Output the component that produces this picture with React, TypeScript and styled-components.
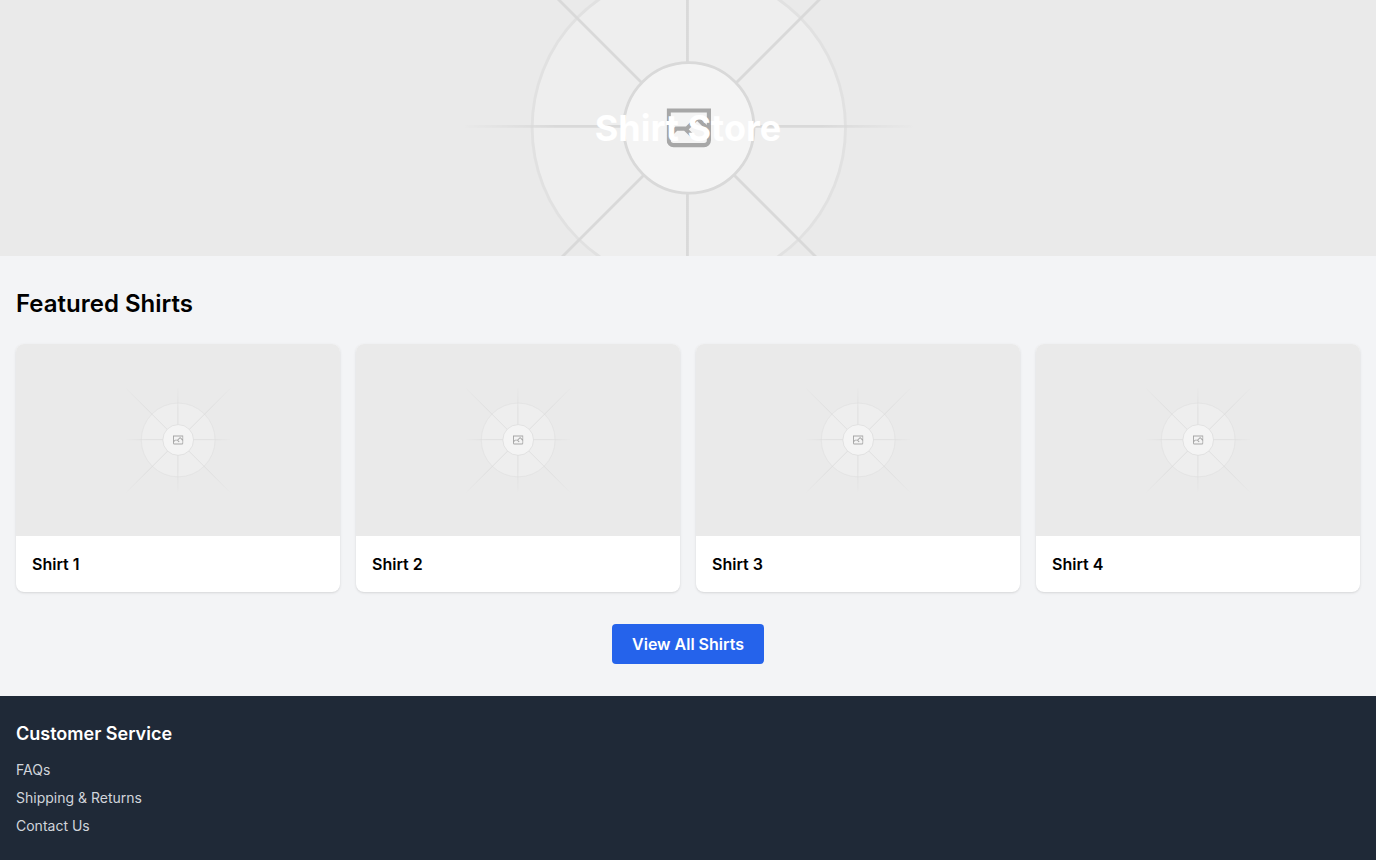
import React, { useId } from "react";
import styled, { createGlobalStyle } from "styled-components";

const GlobalStyle = createGlobalStyle`
  *, *::before, *::after { box-sizing: border-box; }
  body {
    margin: 0;
    background: #f3f4f6;
    color: #000;
    font-family: Inter, "Liberation Sans", sans-serif;
    font-size: 16px;
    line-height: 24px;
  }
  h1, h2, h3, ul { margin: 0; padding: 0; }
`;

const Hero = styled.header`
  display: grid;
  height: 256px;
  overflow: hidden;

  > * {
    grid-area: 1 / 1;
  }
`;

const Artwork = styled.svg<{ $height: number }>`
  display: block;
  width: 100%;
  height: ${(p) => p.$height}px;
`;

const HeroTitle = styled.h1`
  place-self: center;
  z-index: 1;
  color: #fff;
  font-size: 36px;
  line-height: 40px;
  font-weight: 700;
`;

const Featured = styled.main`
  padding: 32px 16px;
`;

const SectionTitle = styled.h2`
  margin-bottom: 24px;
  font-size: 24px;
  line-height: 32px;
  font-weight: 600;
`;

const ShirtGrid = styled.div`
  display: grid;
  grid-template-columns: repeat(4, minmax(0, 1fr));
  gap: 16px;

  @media (max-width: 800px) {
    grid-template-columns: repeat(2, minmax(0, 1fr));
  }
`;

const Card = styled.article`
  overflow: hidden;
  border-radius: 8px;
  background: #fff;
  box-shadow: 0 1px 3px rgba(0, 0, 0, 0.1), 0 1px 2px -1px rgba(0, 0, 0, 0.1);
`;

const CardTitle = styled.h3`
  padding: 16px;
  font-size: 16px;
  line-height: 24px;
  font-weight: 600;
`;

const Actions = styled.div`
  display: flex;
  justify-content: center;
  margin-top: 32px;
`;

const PrimaryButton = styled.button`
  padding: 8px 20px;
  border: 0;
  border-radius: 4px;
  background: #2563eb;
  color: #fff;
  font: inherit;
  font-weight: 600;
  cursor: pointer;
`;

const Footer = styled.footer`
  padding: 24px 16px;
  background: #1f2937;
  color: #fff;
`;

const FooterTitle = styled.h3`
  margin-bottom: 12px;
  font-size: 18px;
  line-height: 28px;
  font-weight: 600;
`;

const LinkList = styled.ul`
  display: flex;
  flex-direction: column;
  align-items: flex-start;
  gap: 8px;
  list-style: none;
  font-size: 14px;
  line-height: 20px;
`;

const FooterLink = styled.a`
  display: block;
  color: #d1d5db;
  text-decoration: none;
`;

type FadeProps = { id: string; x1: number; x2: number; y1: number; y2: number };

function Fade(props: FadeProps) {
  return (
    <linearGradient {...props} gradientUnits="userSpaceOnUse">
      <stop stopColor="#C9C9C9" stopOpacity="0" />
      <stop offset=".208" stopColor="#C9C9C9" />
      <stop offset=".792" stopColor="#C9C9C9" />
      <stop offset="1" stopColor="#C9C9C9" stopOpacity="0" />
    </linearGradient>
  );
}

function Placeholder({ height, label }: { height: number; label: string }) {
  const id = useId().replace(/[^a-zA-Z0-9]/g, "");
  return (
    <Artwork
      $height={height}
      viewBox="0 0 1200 1200"
      preserveAspectRatio="xMidYMid slice"
      fill="none"
      role="img"
      aria-label={label}
    >
      <rect width="1200" height="1200" fill="#EAEAEA" />
      <g opacity=".5">
        <g opacity=".5">
          <circle cx="600.709" cy="599.88" r="136.62" fill="#FAFAFA" />
          <circle cx="600.709" cy="599.88" r="136.62" stroke="#C9C9C9" strokeWidth="2.418" />
        </g>
        <g strokeWidth="2.418">
          <path
            stroke={`url(#${id}a)`}
            d="M0-1.209h553.581"
            transform="scale(1 -1) rotate(45 1163.11 91.165)"
          />
          <path stroke={`url(#${id}b)`} d="M404.846 598.671h391.726" />
          <path stroke={`url(#${id}c)`} d="M599.5 795.742V404.017" />
          <path stroke={`url(#${id}d)`} d="m795.717 796.597-391.441-391.44" />
        </g>
        <circle cx="600.709" cy="599.88" r="56.825" fill="#fff" />
        <g clipPath={`url(#${id}e)`}>
          <path
            fill="#666"
            fillRule="evenodd"
            clipRule="evenodd"
            d="M616.426 586.58h-31.434v16.176l3.553-3.554.531-.531h9.068l.074-.074 8.463-8.463h2.565l7.18 7.181V586.58Zm-15.715 14.654 3.698 3.699 1.283 1.282-2.565 2.565-1.282-1.283-5.2-5.199h-6.066l-5.514 5.514-.073.073v2.876a2.418 2.418 0 0 0 2.418 2.418h26.598a2.418 2.418 0 0 0 2.418-2.418v-8.317l-8.463-8.463-7.181 7.181-.071.072Zm-19.347 5.442v4.085a6.045 6.045 0 0 0 6.046 6.045h26.598a6.044 6.044 0 0 0 6.045-6.045v-7.108l1.356-1.355-1.282-1.283-.074-.073v-17.989h-38.689v23.43l-.146.146.146.147Z"
          />
        </g>
        <circle cx="600.709" cy="599.88" r="56.825" stroke="#C9C9C9" strokeWidth="2.418" />
      </g>
      <defs>
        <Fade id={`${id}a`} x1={554.061} x2={-0.48} y1={0.083} y2={0.087} />
        <Fade id={`${id}b`} x1={796.912} x2={404.507} y1={599.963} y2={599.965} />
        <Fade id={`${id}c`} x1={600.792} x2={600.794} y1={403.677} y2={796.082} />
        <Fade id={`${id}d`} x1={404.85} x2={796.972} y1={403.903} y2={796.02} />
        <clipPath id={`${id}e`}>
          <path d="M581.364 580.535h38.689v38.689h-38.689z" />
        </clipPath>
      </defs>
    </Artwork>
  );
}

const shirts = ["Shirt 1", "Shirt 2", "Shirt 3", "Shirt 4"];
const serviceLinks = ["FAQs", "Shipping & Returns", "Contact Us"];

export default function App() {
  return (
    <>
      <GlobalStyle />
      <Hero>
        <Placeholder height={256} label="Shirt Store" />
        <HeroTitle>Shirt Store</HeroTitle>
      </Hero>
      <Featured>
        <SectionTitle>Featured Shirts</SectionTitle>
        <ShirtGrid>
          {shirts.map((name) => (
            <Card key={name}>
              <Placeholder height={192} label={name} />
              <CardTitle>{name}</CardTitle>
            </Card>
          ))}
        </ShirtGrid>
        <Actions>
          <PrimaryButton type="button">View All Shirts</PrimaryButton>
        </Actions>
      </Featured>
      <Footer>
        <FooterTitle>Customer Service</FooterTitle>
        <LinkList>
          {serviceLinks.map((text) => (
            <li key={text}>
              <FooterLink href="#">{text}</FooterLink>
            </li>
          ))}
        </LinkList>
      </Footer>
    </>
  );
}
